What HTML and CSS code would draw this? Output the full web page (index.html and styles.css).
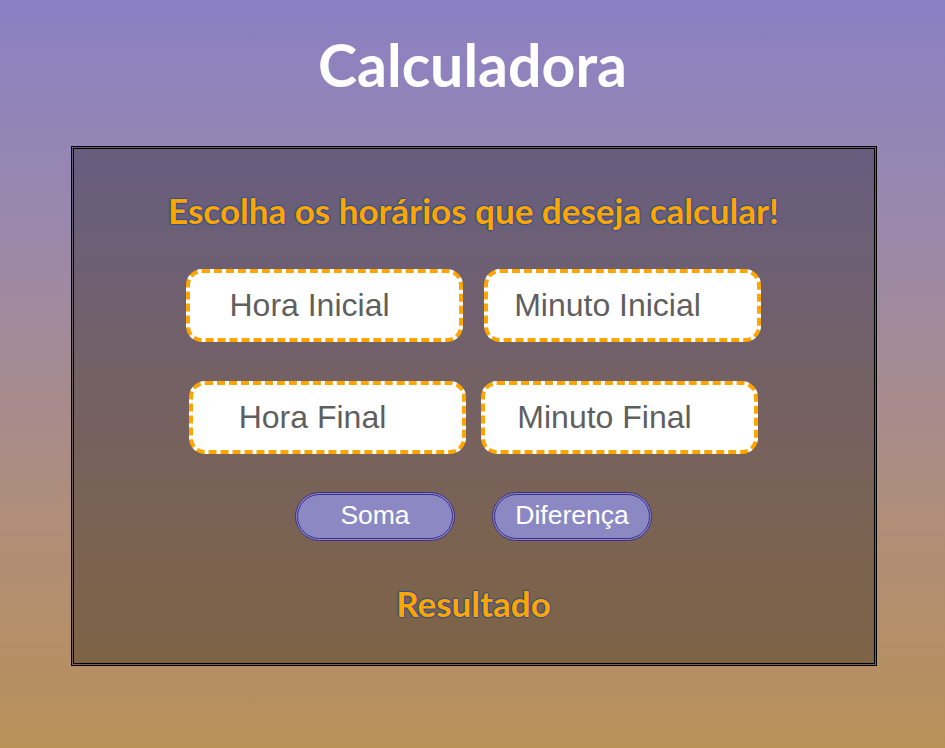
FILE: index.html
```html
<!DOCTYPE html>
<html lang="pt">
<head>
<meta charset="utf-8">
<title>Calculadora</title>
<link rel="stylesheet" href="styles.css">
</head>
<body>
<h1 class="title">Calculadora</h1>
<main class="panel">
  <h2 class="subtitle">Escolha os horários que deseja calcular!</h2>
  <div class="row row-top">
    <input class="field" type="text" placeholder="Hora Inicial">
    <input class="field" type="text" placeholder="Minuto Inicial">
  </div>
  <div class="row row-bottom">
    <input class="field" type="text" placeholder="Hora Final">
    <input class="field" type="text" placeholder="Minuto Final">
  </div>
  <div class="actions">
    <button class="btn" type="button">Soma</button>
    <button class="btn" type="button">Diferença</button>
  </div>
  <h2 class="result">Resultado</h2>
</main>
</body>
</html>
```
FILE: styles.css
```css
html, body {
  margin: 0;
  padding: 0;
}
body {
  height: 748px;
  background: linear-gradient(to bottom, #8a80c4 0%, #9a88ac 30%, #b08e78 70%, #b89058 100%);
  font-family: "Lato", "Open Sans", sans-serif;
  overflow: hidden;
}
.title {
  margin: 0;
  padding-top: 30px;
  height: 146px;
  box-sizing: border-box;
  text-align: center;
  color: #ffffff;
  font-size: 59px;
  font-weight: 700;
  line-height: 70px;
}
.panel {
  width: 800px;
  height: 514px;
  margin: 0 auto;
  border: 3px double #000;
  background: rgba(0, 0, 0, 0.3);
  display: flex;
  flex-direction: column;
  align-items: center;
  box-sizing: content-box;
  position: relative;
  left: 1px;
}
.subtitle, .result {
  margin: 0;
  color: #ffa500;
  font-weight: 700;
  font-size: 35px;
  line-height: 40px;
  text-shadow: -1px 0 1px #2d4f8f, 0 1px 1px #2d4f8f, 1px 0 1px #2d4f8f, 0 -1px 1px #2d4f8f;
}
.subtitle {
  margin-top: 41px;
}
.row {
  display: flex;
  justify-content: center;
}
.row-top {
  margin-top: 39px;
  gap: 21px;
}
.row-bottom {
  margin-top: 39px;
  gap: 15px;
}
.field {
  width: 277px;
  height: 73px;
  box-sizing: border-box;
  border: 4px dashed #ffa500;
  border-radius: 16px;
  background: #fff;
  padding: 0 30px 0 0;
  text-align: center;
  font-family: "Liberation Sans", Arial, sans-serif;
  font-size: 32px;
  color: #333;
  outline: none;
}
.field::placeholder {
  color: #5f5f5f;
  opacity: 1;
}
.actions {
  display: flex;
  gap: 37px;
  margin-top: 38px;
}
.btn {
  width: 160px;
  height: 49px;
  box-sizing: border-box;
  border: 3px double #3b2f85;
  border-radius: 25px;
  background: #8c88c4;
  color: #ffffff;
  font-family: "Liberation Sans", Arial, sans-serif;
  font-size: 26.5px;
  padding: 0 0 2px 0;
}
.result {
  margin-top: 42px;
}
```
